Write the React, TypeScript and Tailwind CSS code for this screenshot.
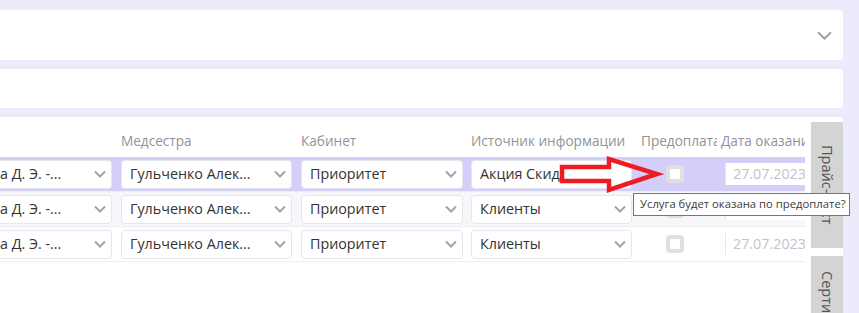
import React from "react";

const Chevron = ({ className = "" }: { className?: string }) => (
  <svg width="12" height="8" viewBox="0 0 12 8" className={className}>
    <path d="M1 1.5 L6 6.5 L11 1.5" fill="none" stroke="#a3a3a3" strokeWidth="2" />
  </svg>
);

type SelProps = { text: string; chevron?: boolean; cut?: boolean };
const Select = ({ text, chevron = true, cut = false }: SelProps) => (
  <div
    className={`h-[29px] w-full bg-white border border-[#e4e7ed] flex items-center justify-between pr-[5px] overflow-hidden ${
      cut ? "border-l-0 rounded-r-[4px] pl-0" : "rounded-[4px] pl-[8px]"
    }`}
  >
    <span className="text-[14.3px] text-[#333333] whitespace-nowrap overflow-hidden">{text}</span>
    {chevron && <Chevron className="shrink-0" />}
  </div>
);

const Check = () => (
  <div className="w-[18px] h-[18px] rounded-[4px] bg-[#e0e0e0] flex items-center justify-center">
    <div className="w-[10px] h-[10px] bg-white rounded-[1px]" />
  </div>
);

const DateBox = () => (
  <div className="ml-[8px] h-[22px] w-[120px] bg-white border-l border-[#e4e7ed] flex items-center pl-[7px]">
    <span className="text-[14.3px] text-[#c0c4cc] whitespace-nowrap">27.07.2023</span>
  </div>
);

type RowProps = { bg: string; src: string; srcChevron?: boolean };
const Row = ({ bg, src, srcChevron = true }: RowProps) => (
  <div className={`h-[35px] flex items-center border-b border-[#ebeef5] ${bg}`}>
    <div className="w-[117px] pr-[5px] shrink-0">
      <Select text="а Д. Э. -..." cut />
    </div>
    <div className="w-[179px] px-[4px] shrink-0">
      <Select text="Гульченко Алек..." />
    </div>
    <div className="w-[171px] pl-[5px] pr-[4px] shrink-0">
      <Select text="Приоритет" />
    </div>
    <div className="w-[170px] pl-[4px] pr-[5px] shrink-0">
      <Select text={src} chevron={srcChevron} />
    </div>
    <div className="w-[80px] pl-[4px] pr-[8px] shrink-0 flex justify-center">
      <Check />
    </div>
    <div className="flex-1 flex items-center">
      <DateBox />
    </div>
  </div>
);

export default function App() {
  return (
    <div
      className="relative w-[859px] h-[313px] overflow-hidden bg-[#ecebfc] pt-[10px] pr-[16px] flex flex-col gap-[9px]"
      style={{ fontFamily: '"Open Sans", "Noto Sans", sans-serif' }}
    >
      <div className="h-[50px] shrink-0 bg-white rounded-r-[4px] flex items-center justify-end pr-[11px]">
        <svg width="15" height="9" viewBox="0 0 15 9">
          <path d="M1 1.2 L7.5 7.5 L14 1.2" fill="none" stroke="#a0a0a0" strokeWidth="2" />
        </svg>
      </div>
      <div className="h-[39px] shrink-0 bg-white rounded-r-[4px]" />
      <div className="flex-1 bg-white rounded-tr-[4px] flex overflow-hidden">
        <div className="w-[805px] shrink-0 overflow-hidden flex flex-col">
          <div className="h-[40px] flex pt-[14px] text-[13.6px] leading-[20px] text-[#909399] whitespace-nowrap">
            <div className="w-[117px] shrink-0" />
            <div className="w-[179px] px-[4px] shrink-0">Медсестра</div>
            <div className="w-[171px] pl-[5px] pr-[4px] shrink-0">Кабинет</div>
            <div className="w-[170px] pl-[4px] pr-[5px] shrink-0">Источник информации</div>
            <div className="w-[80px] pl-[4px] pr-[5px] shrink-0 overflow-hidden">Предоплата</div>
            <div className="flex-1 pl-[4px] overflow-hidden">Дата оказания услуги</div>
          </div>
          <Row bg="bg-[#d4cff8]" src="Акция Скид" srcChevron={false} />
          <Row bg="bg-[#f5f7fa]" src="Клиенты" />
          <Row bg="bg-white" src="Клиенты" />
        </div>
        <div className="ml-[6px] w-[32px] shrink-0 pt-[5px] flex flex-col gap-[8px]">
          <div className="h-[126px] shrink-0 bg-[#d4d4d4] flex items-center justify-center">
            <span
              className="text-[14.5px] text-[#555555] whitespace-nowrap"
              style={{ writingMode: "vertical-rl" }}
            >
              Прайс-лист
            </span>
          </div>
          <div className="h-[126px] shrink-0 bg-[#d4d4d4] flex items-center justify-center">
            <span
              className="text-[14.5px] text-[#555555] whitespace-nowrap"
              style={{ writingMode: "vertical-rl" }}
            >
              Сертификаты
            </span>
          </div>
        </div>
      </div>

      <svg className="absolute left-0 top-0 w-[859px] h-[313px] pointer-events-none" viewBox="0 0 859 313">
        <polygon
          points="562,167 609,167 609,159 657,174 609,190 609,181 562,181"
          fill="none"
          stroke="#ed1c24"
          strokeWidth="4.5"
          strokeLinejoin="miter"
          strokeMiterlimit="10"
        />
      </svg>

      <div className="absolute left-[633px] top-[193px] w-[217px] h-[23px] bg-white border border-[#767676] flex items-center pl-[6px]">
        <span className="text-[11.3px] text-[#3c3c3c] whitespace-nowrap">Услуга будет оказана по предоплате?</span>
      </div>
    </div>
  );
}
